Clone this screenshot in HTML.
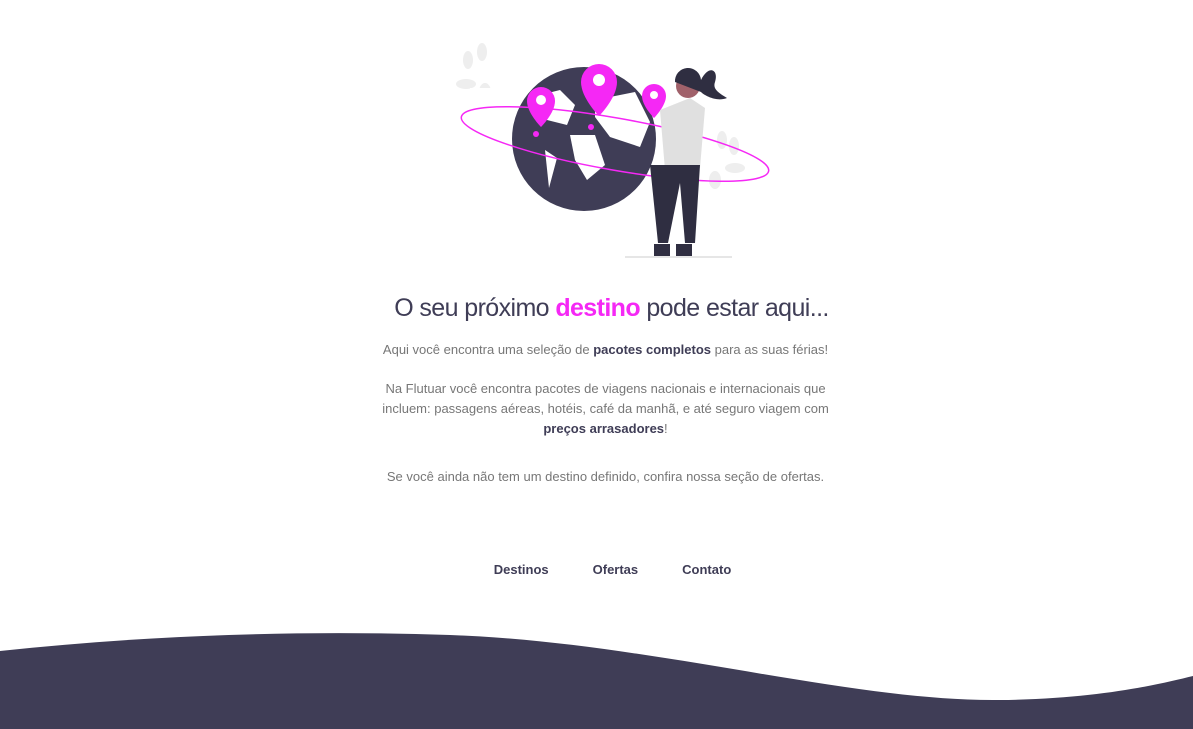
<!DOCTYPE html>
<html><head><meta charset="utf-8"><style>
body{margin:0;width:1193px;height:729px;background:#fff;overflow:hidden;position:relative;font-family:"Liberation Sans",sans-serif}
.t{position:absolute;left:9px;width:1193px;text-align:center}
h1{margin:0;font-weight:400;font-size:25px;color:#3f3d56;letter-spacing:-0.6px}
h1 span{color:#f528f5;font-weight:bold}
p{margin:0;font-size:13px;color:#777;line-height:20px}
b{color:#3f3d56}
.nav a{font-weight:bold;font-size:13px;color:#3f3d56;text-decoration:none;margin:0 22px}
</style></head><body>
<svg style="position:absolute;left:0;top:0" width="1193" height="300">
<g fill="#eee"><ellipse cx="482" cy="52" rx="5" ry="9"/><ellipse cx="468" cy="60" rx="5" ry="9"/><ellipse cx="466" cy="84" rx="10" ry="5"/><ellipse cx="485" cy="92" rx="6" ry="9"/>
<ellipse cx="722" cy="140" rx="5" ry="9"/><ellipse cx="734" cy="146" rx="5" ry="9"/><ellipse cx="735" cy="168" rx="10" ry="5"/><ellipse cx="715" cy="180" rx="6" ry="9"/></g>
<circle cx="584" cy="139" r="72" fill="#3f3d56"/>
<g fill="#fff"><path d="M540 95 l20 -5 15 15 -8 20 -20 -5z"/><path d="M570 135 l25 0 10 30 -18 15 -12 -20z"/><path d="M595 100 l40 -8 15 30 -10 25 -30 -10 -15 -20z"/><path d="M545 150 l12 8 -8 30z"/></g>
<ellipse cx="615" cy="144" rx="156" ry="26" transform="rotate(10 615 144)" fill="none" stroke="#f528f5" stroke-width="1.5"/>
<rect x="470" y="88" width="48" height="16" fill="#fff"/>
<g fill="#f528f5"><path d="M541 87 a14 14 0 0 1 14 14 c0 12 -14 26 -14 26 c0 0 -14 -14 -14 -26 a14 14 0 0 1 14 -14z"/><circle cx="536" cy="134" r="3"/>
<path d="M599 64 a18 18 0 0 1 18 18 c0 16 -18 34 -18 34 c0 0 -18 -18 -18 -34 a18 18 0 0 1 18 -18z"/><circle cx="591" cy="127" r="3"/>
<path d="M654 84 a12 12 0 0 1 12 12 c0 10 -12 22 -12 22 c0 0 -12 -12 -12 -22 a12 12 0 0 1 12 -12z"/></g>
<g fill="#fff"><circle cx="541" cy="100" r="5"/><circle cx="599" cy="80" r="6"/><circle cx="654" cy="95" r="4"/></g>
<path d="M660 110 l30 -12 15 10 -5 60 -35 2z" fill="#e0e0e0"/>
<path d="M650 165 h50 l-5 78 h-10 l-5 -60 -12 60 h-10z" fill="#2f2e41"/>
<circle cx="688" cy="86" r="12" fill="#a0616a"/><path d="M675 82 a13 13 0 0 1 26 -2 c8 -16 18 -10 14 2 c-3 8 6 12 12 16 c-10 4 -22 -2 -26 -6z" fill="#2f2e41"/>
<path d="M654 244 h16 v12 h-16z M676 244 h16 v12 h-16z" fill="#2f2e41"/>
<line x1="625" y1="257" x2="732" y2="257" stroke="#ccc"/>
</svg>
<div class="t" style="top:294px;left:15px"><h1>O seu próximo <span>destino</span> pode estar aqui...</h1></div>
<div class="t" style="top:340px"><p>Aqui você encontra uma seleção de <b>pacotes completos</b> para as suas férias!</p></div>
<div class="t" style="top:379px"><p>Na Flutuar você encontra pacotes de viagens nacionais e internacionais que<br>incluem: passagens aéreas, hotéis, café da manhã, e até seguro viagem com<br><b>preços arrasadores</b>!</p></div>
<div class="t" style="top:467px"><p>Se você ainda não tem um destino definido, confira nossa seção de ofertas.</p></div>
<div class="t nav" style="top:561px;left:16px"><a>Destinos</a><a>Ofertas</a><a>Contato</a></div>
<svg style="position:absolute;left:0;top:620px" width="1193" height="109"><path d="M0 31 C150 15 300 10 450 15 C650 22 850 82 1000 80 C1100 79 1160 64 1193 56 V109 H0Z" fill="#3f3d56"/></svg>
</body></html>
